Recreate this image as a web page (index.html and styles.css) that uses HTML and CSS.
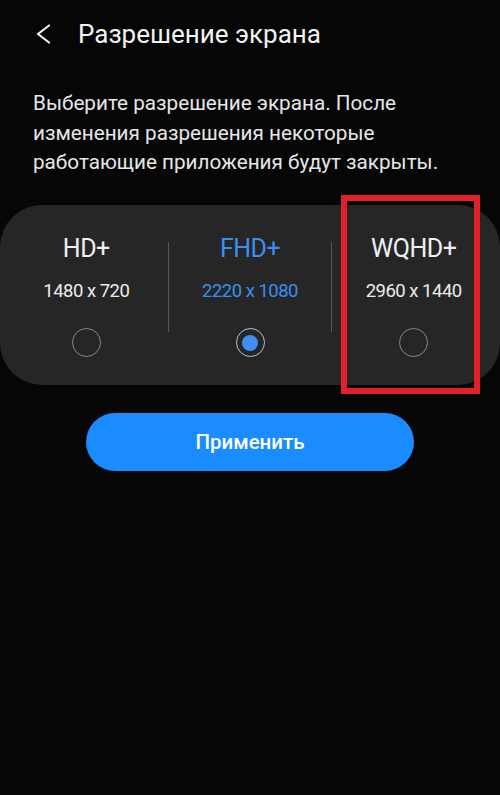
FILE: index.html
```html
<!DOCTYPE html>
<html lang="ru">
<head>
<meta charset="utf-8">
<link rel="stylesheet" href="styles.css">
</head>
<body>
<div class="screen">
  <header class="header">
    <svg class="back" width="16" height="20" viewBox="0 0 16 20"><polyline points="13,1.5 2,10 13,18.5" fill="none" stroke="#f2f2f2" stroke-width="2.2" stroke-linecap="round" stroke-linejoin="round"/></svg>
    <h1 class="title">Разрешение экрана</h1>
  </header>
  <p class="desc">Выберите разрешение экрана. После изменения разрешения некоторые работающие приложения будут закрыты.</p>
  <div class="card">
    <div class="col">
      <div class="name">HD+</div>
      <div class="res">1480 x 720</div>
      <div class="radio"></div>
    </div>
    <div class="divider"></div>
    <div class="col active">
      <div class="name">FHD+</div>
      <div class="res">2220 x 1080</div>
      <div class="radio checked"><div class="dot"></div></div>
    </div>
    <div class="divider"></div>
    <div class="col">
      <div class="name">WQHD+</div>
      <div class="res">2960 x 1440</div>
      <div class="radio"></div>
    </div>
    <div class="highlight"></div>
  </div>
  <div class="actions">
    <button class="apply">Применить</button>
  </div>
</div>
</body>
</html>
```
FILE: styles.css
```css
html, body {
  margin: 0;
  padding: 0;
  background: #060606;
}
body {
  width: 500px;
  height: 795px;
  overflow: hidden;
  font-family: Roboto, "Noto Sans", "Liberation Sans", sans-serif;
  color: #f0f0f0;
}
.screen {
  display: flex;
  flex-direction: column;
}
.header {
  display: flex;
  align-items: center;
  padding: 17px 0 0 36px;
  height: 34px;
}
.back {
  display: block;
  flex: none;
}
.title {
  margin: 0 0 0 26px;
  font-size: 26px;
  font-weight: 400;
  line-height: 34px;
  color: #f2f2f2;
}
.desc {
  margin: 38px 0 0 0;
  padding: 0 30px 0 33px;
  font-size: 20.7px;
  line-height: 29.5px;
  color: #e6e6e6;
}
.card {
  position: relative;
  margin-top: 27px;
  height: 180px;
  box-sizing: border-box;
  background: #262626;
  border-radius: 42px;
  display: flex;
  align-items: flex-start;
  padding: 28.5px 5px 0 5px;
}
.col {
  flex: 1;
  display: flex;
  flex-direction: column;
  align-items: center;
}
.name {
  font-size: 25px;
  line-height: 32px;
  letter-spacing: -0.5px;
  color: #f0f0f0;
}
.res {
  margin-top: 13.5px;
  font-size: 18.5px;
  line-height: 24px;
  letter-spacing: -0.5px;
  color: #ececec;
}
.col.active .name,
.col.active .res {
  color: #3b8ff0;
}
.radio {
  margin-top: 25.5px;
  width: 29px;
  height: 29px;
  box-sizing: border-box;
  border: 1.5px solid #8a8a8a;
  border-radius: 50%;
  display: flex;
  align-items: center;
  justify-content: center;
}
.radio.checked {
  border-color: #b9c4d2;
}
.dot {
  width: 16px;
  height: 16px;
  border-radius: 50%;
  background: #3f8ff5;
}
.divider {
  align-self: flex-start;
  margin-top: 8.5px;
  width: 1px;
  height: 90px;
  background: #575757;
}
.highlight {
  position: absolute;
  left: 341px;
  top: -10px;
  width: 139px;
  height: 199px;
  box-sizing: border-box;
  border: 6px solid #e0202b;
}
.actions {
  display: flex;
  justify-content: center;
  margin-top: 28px;
}
.apply {
  width: 328px;
  height: 58px;
  border: none;
  border-radius: 29px;
  background: #1a8cff;
  color: #ffffff;
  font-family: Roboto, "Noto Sans", "Liberation Sans", sans-serif;
  font-size: 20.5px;
  font-weight: 500;
  padding: 0;
}
```
